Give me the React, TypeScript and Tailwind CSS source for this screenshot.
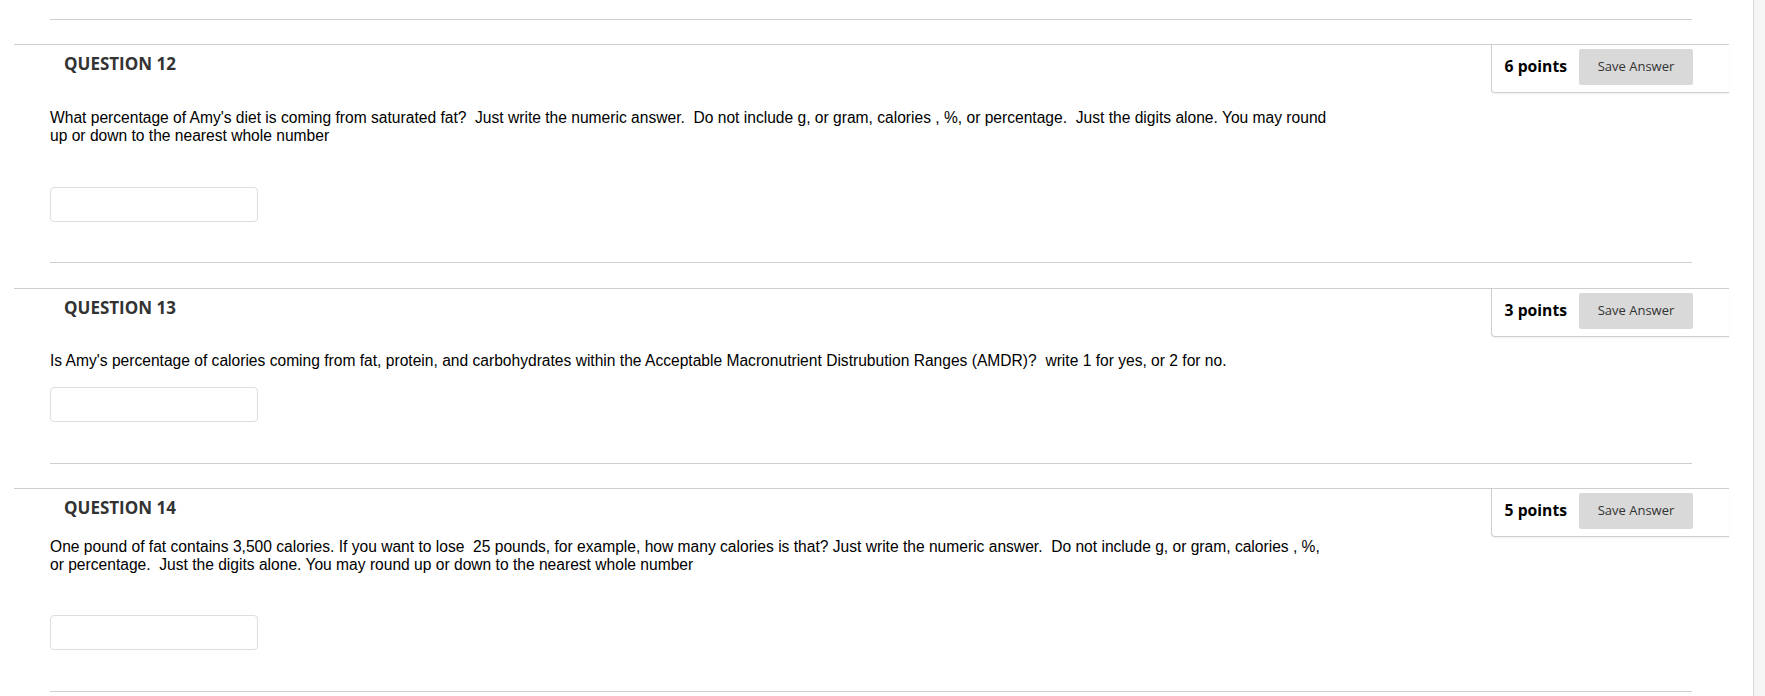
import { useState } from "react";

type Question = {
  num: number;
  points: number;
  text: string;
  top: string;
  textMt: string;
  inputMt: string;
  pb: string;
};

const questions: Question[] = [
  {
    num: 12,
    points: 6,
    text: "What percentage of Amy's diet is coming from saturated fat?\u00a0 Just write the numeric answer.\u00a0 Do not include g, or gram, calories , %, or percentage.\u00a0 Just the digits alone. You may round up or down to the nearest whole number",
    top: "mt-[24px]",
    textMt: "mt-[33px]",
    inputMt: "mt-[42px]",
    pb: "pb-[40px]",
  },
  {
    num: 13,
    points: 3,
    text: "Is Amy's percentage of calories coming from fat, protein, and carbohydrates within the Acceptable Macronutrient Distrubution Ranges (AMDR)?\u00a0 write 1 for yes, or 2 for no.",
    top: "mt-[25px]",
    textMt: "mt-[32px]",
    inputMt: "mt-[17px]",
    pb: "pb-[41px]",
  },
  {
    num: 14,
    points: 5,
    text: "One pound of fat contains 3,500 calories. If you want to lose \u00a025 pounds, for example, how many calories is that? Just write the numeric answer.\u00a0 Do not include g, or gram, calories , %, or percentage.\u00a0 Just the digits alone. You may round up or down to the nearest whole number",
    top: "mt-[24px]",
    textMt: "mt-[18px]",
    inputMt: "mt-[41px]",
    pb: "pb-[41px]",
  },
];

function QuestionBlock({ q }: { q: Question }) {
  const [answer, setAnswer] = useState("");

  return (
    <div className={`relative border-t border-[#cfcfcf] ${q.top}`}>
      <div className="absolute top-0 right-0 flex h-[48px] w-[238px] items-start justify-end pr-[36px] pt-[4px] border-l border-b border-[#cfcfcf] rounded-bl-[4px] bg-white shadow-[0_1px_2px_rgba(0,0,0,0.06)]">
        <div className="flex h-[36px] items-center gap-[12px]">
          <span className="font-['Open_Sans',sans-serif] text-[15.7px] font-bold text-black">
            {q.points} points
          </span>
          <button className="h-[36px] w-[114px] rounded-[2px] bg-[#d9d9d9] font-['Open_Sans',sans-serif] text-[13px] text-[#333]">
            Save Answer
          </button>
        </div>
      </div>
      <div className="pt-[7px] pl-[50px]">
        <h3 className="h-[24px] leading-[24px] font-['Open_Sans',sans-serif] text-[17px] font-bold text-[#333]">
          QUESTION {q.num}
        </h3>
      </div>
      <div className={`ml-[36px] mr-[37px] border-b border-[#cfcfcf] ${q.pb}`}>
        <p
          className={`w-[1282px] font-['Liberation_Sans',Arial,sans-serif] text-[15.6px] leading-[18px] text-black ${q.textMt}`}
        >
          {q.text}
        </p>
        <input
          type="text"
          value={answer}
          onChange={(e) => setAnswer(e.target.value)}
          className={`block h-[35px] w-[208px] rounded-[4px] border border-[#dedede] bg-white px-2 font-['Liberation_Sans',Arial,sans-serif] text-[15px] outline-none ${q.inputMt}`}
        />
      </div>
    </div>
  );
}

export default function App() {
  return (
    <div className="flex h-[696px] w-[1765px] overflow-hidden bg-white">
      <div className="w-[1753px]">
        <div className="ml-[14px] w-[1715px]">
          <div className="ml-[36px] mr-[37px] h-[20px] border-b border-[#cfcfcf]" />
          {questions.map((q) => (
            <QuestionBlock key={q.num} q={q} />
          ))}
        </div>
      </div>
      <div className="flex-1 border-l border-[#dadada] bg-[#f5f5f5]" />
    </div>
  );
}
